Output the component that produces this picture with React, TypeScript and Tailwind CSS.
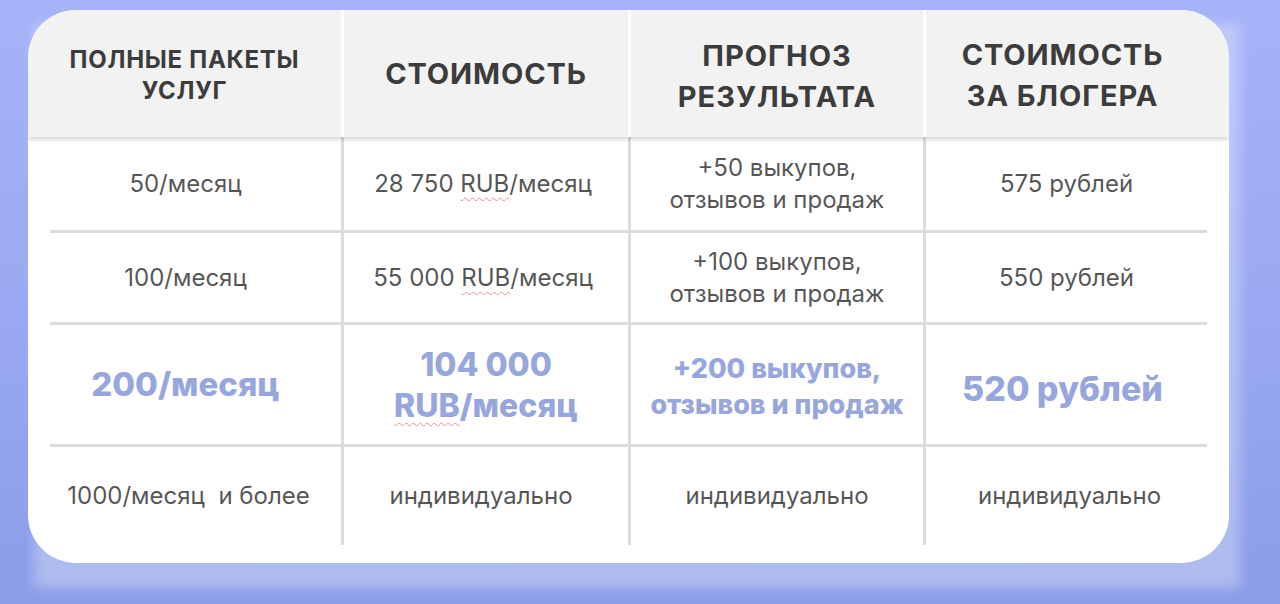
import React from "react";

const font = { fontFamily: "Inter, 'Noto Sans', sans-serif" };

function Rub() {
  return (
    <span className="underline decoration-wavy decoration-[#e06060] decoration-1 underline-offset-[5px]">
      RUB
    </span>
  );
}

export default function App() {
  const cell =
    "flex items-center justify-center text-center border-[#cdcdcd]";
  const normal = "text-[24px] leading-[32px] text-[#0c0c0c] font-normal";
  const blue = "text-[#6b80cf] font-extrabold";
  return (
    <div
      className="w-[1280px] h-[604px] overflow-hidden bg-gradient-to-b from-[#a7b3f8] via-[#9aa9f1] to-[#8b9de8]"
      style={font}
    >
      <div className="grid pl-[28px] pt-[10px]">
        <div className="col-start-1 row-start-1 ml-[6px] mt-[14px] w-[1206px] h-[564px] bg-white/30 blur-[6px]" />
        <div className="col-start-1 row-start-1 w-[1201px] h-[553px] rounded-[48px] bg-white overflow-hidden">
          {/* header */}
          <div className="relative z-10 h-[127px] bg-[#f2f2f2] grid grid-cols-[313px_287px_295px_306px] shadow-[0_3px_4px_rgba(0,0,0,0.14)] text-[#3c3c3c] font-bold uppercase">
            <div className="flex items-center justify-center text-center text-[24px] leading-[31px] tracking-[0.03em] pt-[2px]">
              <span>
                Полные пакеты
                <br />
                услуг
              </span>
            </div>
            <div className="flex items-center justify-center text-center text-[29px] leading-[41px] tracking-[0.03em] border-l-[3px] border-white">
              Стоимость
            </div>
            <div className="flex items-center justify-center text-center text-[29px] leading-[41px] tracking-[0.035em] border-l-[3px] border-white pt-[4px]">
              <span>
                Прогноз
                <br />
                результата
              </span>
            </div>
            <div className="flex items-center justify-center text-center text-[29px] leading-[41px] tracking-[0.03em] border-l-[3px] border-white pr-[30px] pt-[2px]">
              <span>
                Стоимость
                <br />
                за блогера
              </span>
            </div>
          </div>

          {/* body */}
          <div className="px-[22px] grid grid-cols-[291px_287px_295px_284px]">
            {/* row 1 */}
            <div className={`${cell} ${normal} h-[96px] border-b-[3px] pr-[20px]`}>50/месяц</div>
            <div className={`${cell} ${normal} h-[96px] border-b-[3px] border-l-[3px] pr-[6px]`}>
              <span>
                28 750 <Rub />/месяц
              </span>
            </div>
            <div className={`${cell} ${normal} h-[96px] border-b-[3px] border-l-[3px]`}>
              <span>
                +50 выкупов,
                <br />
                отзывов и продаж
              </span>
            </div>
            <div className={`${cell} ${normal} h-[96px] border-b-[3px] border-l-[3px]`}>575 рублей</div>

            {/* row 2 */}
            <div className={`${cell} ${normal} h-[92px] border-b-[3px] pr-[20px]`}>100/месяц</div>
            <div className={`${cell} ${normal} h-[92px] border-b-[3px] border-l-[3px] pr-[6px]`}>
              <span>
                55 000 <Rub />/месяц
              </span>
            </div>
            <div className={`${cell} ${normal} h-[92px] border-b-[3px] border-l-[3px]`}>
              <span>
                +100 выкупов,
                <br />
                отзывов и продаж
              </span>
            </div>
            <div className={`${cell} ${normal} h-[92px] border-b-[3px] border-l-[3px]`}>550 рублей</div>

            {/* row 3 highlighted */}
            <div className={`${cell} ${blue} text-[33px] h-[122px] border-b-[3px] pr-[20px]`}>200/месяц</div>
            <div className={`${cell} ${blue} text-[32px] leading-[41px] h-[122px] border-b-[3px] border-l-[3px]`}>
              <span>
                104 000
                <br />
                <Rub />/месяц
              </span>
            </div>
            <div className={`${cell} ${blue} text-[27px] leading-[36px] h-[122px] border-b-[3px] border-l-[3px] pt-[4px]`}>
              <span>
                +200 выкупов,
                <br />
                отзывов и продаж
              </span>
            </div>
            <div className={`${cell} ${blue} text-[34px] h-[122px] border-b-[3px] border-l-[3px] pt-[8px] pr-[8px]`}>520 рублей</div>

            {/* row 4 */}
            <div className={`${cell} ${normal} h-[98px] pr-[14px]`}>1000/месяц&nbsp; и более</div>
            <div className={`${cell} ${normal} h-[98px] border-l-[3px] pr-[10px]`}>индивидуально</div>
            <div className={`${cell} ${normal} h-[98px] border-l-[3px]`}>индивидуально</div>
            <div className={`${cell} ${normal} h-[98px] border-l-[3px] pl-[6px]`}>индивидуально</div>
          </div>
        </div>
      </div>
    </div>
  );
}
